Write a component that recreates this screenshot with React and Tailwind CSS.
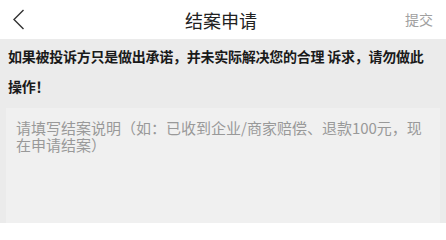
import { useState } from 'react';

const FONT = '"Noto Sans CJK SC", "Liberation Sans", sans-serif';

export default function App() {
  const [note, setNote] = useState('');

  return (
    <div className="w-[446px] h-[223px] overflow-hidden flex flex-col bg-[#ebebeb]" style={{ fontFamily: FONT }}>
      {/* Header */}
      <div className="h-[39px] bg-white flex items-center justify-between shrink-0">
        <button className="w-[44px] h-full flex items-center pl-[12px]" aria-label="返回">
          <svg width="13" height="21" viewBox="0 0 13 21" fill="none">
            <path d="M11.5 1 L2 10.5 L11.5 20" stroke="#333" strokeWidth="1.4" />
          </svg>
        </button>
        <h1 className="text-[18px] leading-none text-[#222] -ml-[4px]">结案申请</h1>
        <button className="w-[44px] pr-[13px] text-[14px] text-[#a0a0a0] text-right">提交</button>
      </div>

      {/* Warning */}
      <p className="px-[8px] pt-[2px] text-[14px] leading-[30px] tracking-[-0.25px] font-bold text-[#1a1a1a] whitespace-nowrap">
        如果被投诉方只是做出承诺，并未实际解决您的合理 诉求，请勿做此<br />
        操作！
      </p>

      {/* Textarea */}
      <div className="mx-[6px] mt-[7px] flex-1 bg-[#f0f0f0]">
        <textarea
          value={note}
          onChange={e => setNote(e.target.value)}
          placeholder={'请填写结案说明（如：已收到企业/商家赔偿、退款100元，现\n在申请结案）'}
          className="w-full h-full resize-none bg-transparent px-[10px] pt-[11px] text-[15px] leading-[17px] text-[#333] placeholder:text-[#999] caret-[#2bb59a] outline-none"
          style={{ fontFamily: FONT }}
        />
      </div>
    </div>
  );
}
